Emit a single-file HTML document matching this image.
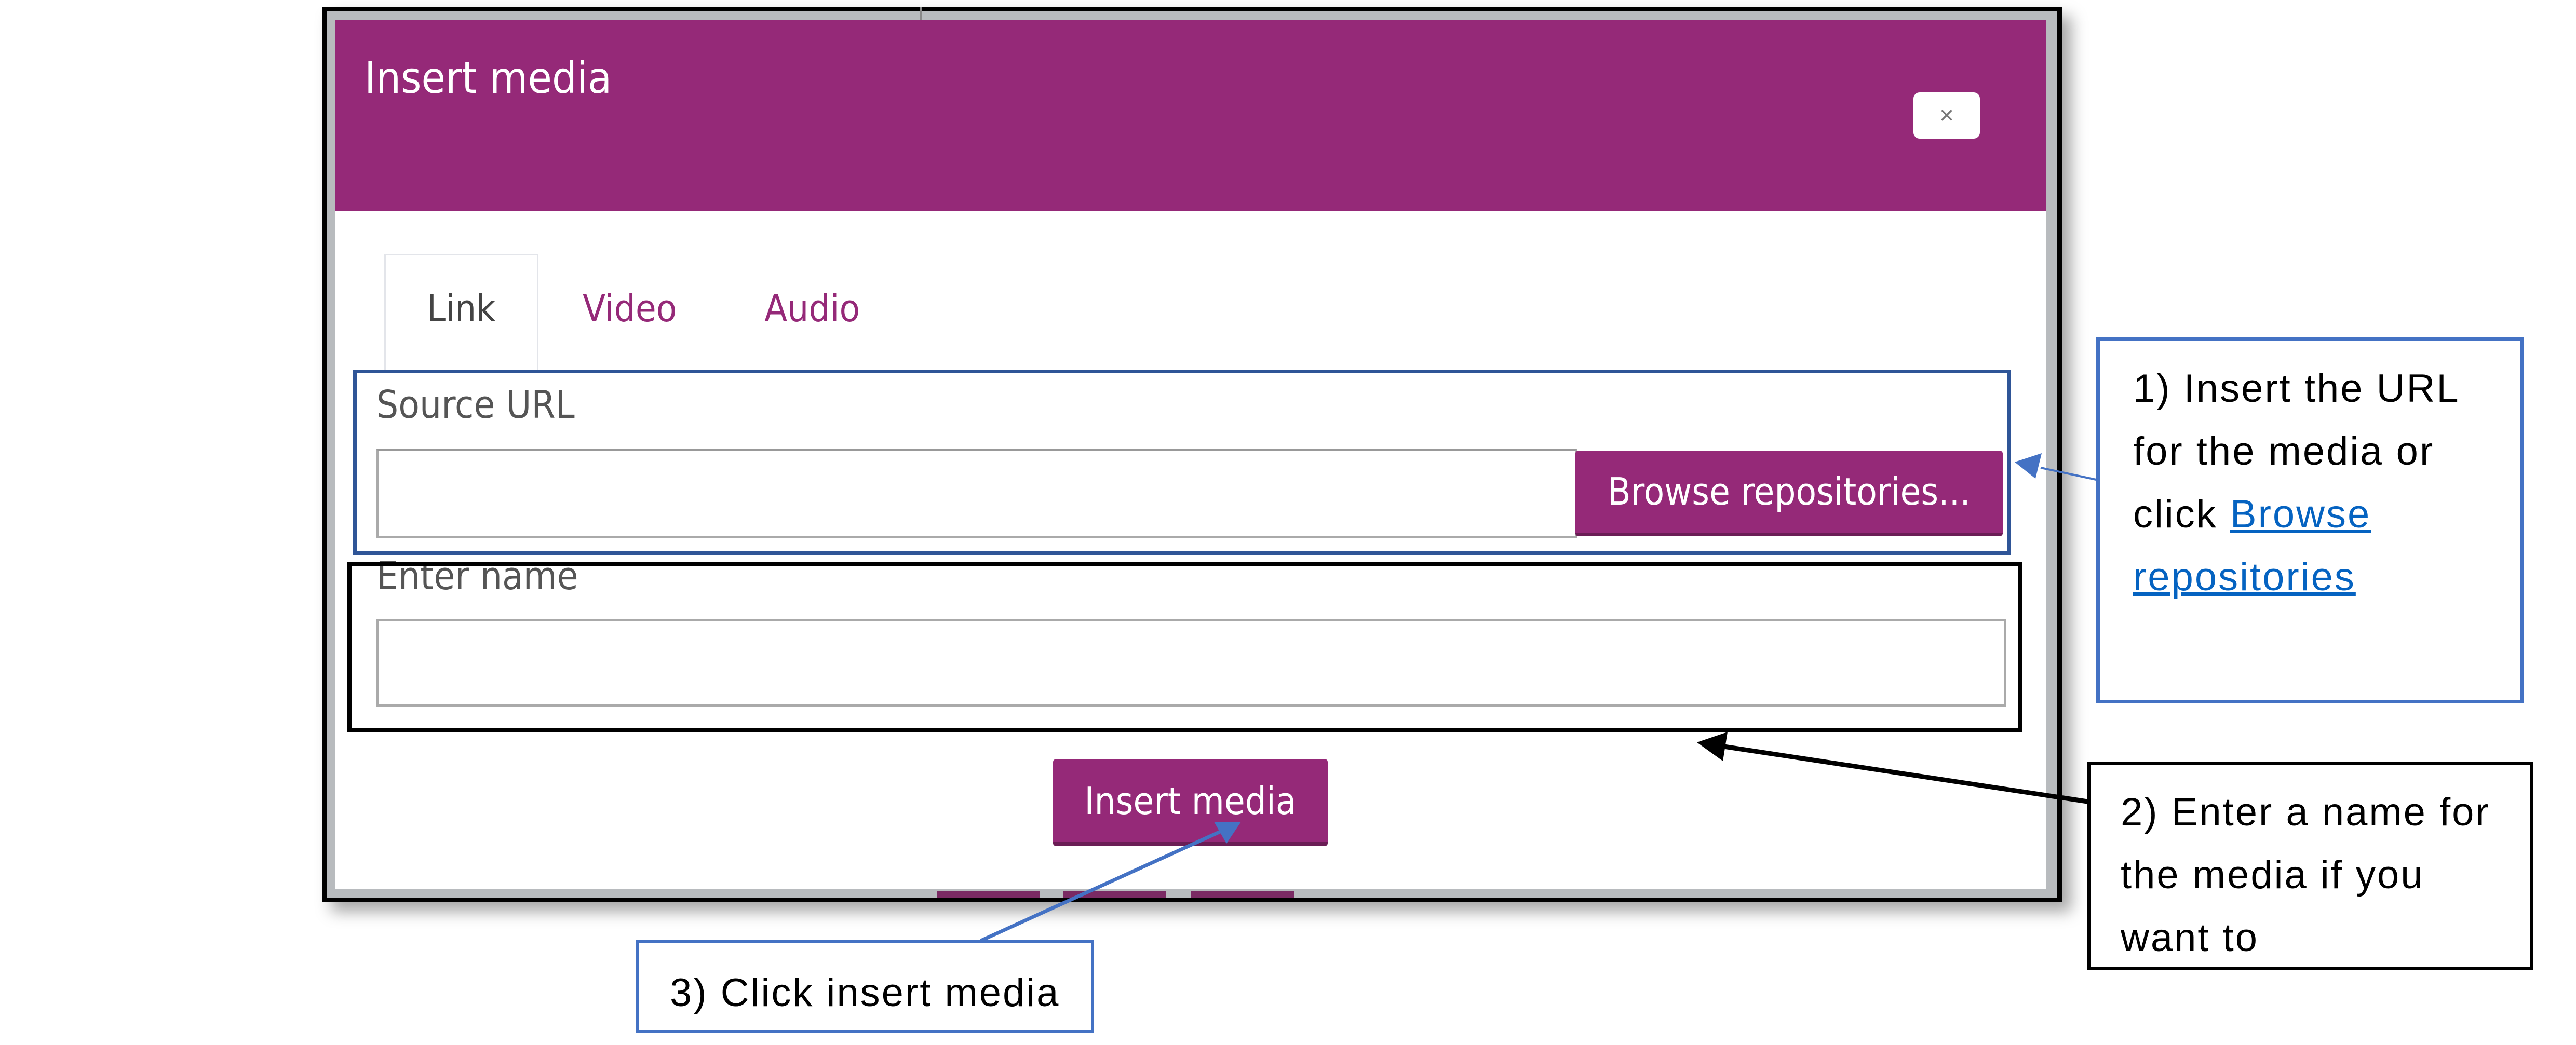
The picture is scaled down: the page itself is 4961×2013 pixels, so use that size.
<!DOCTYPE html>
<html><head><meta charset="utf-8"><style>
*{margin:0;padding:0;box-sizing:border-box}
body{width:4961px;height:2013px;background:#fff;position:relative;overflow:hidden;font-family:"Liberation Sans",sans-serif}
.a{position:absolute}
.ui{font-family:"DejaVu Sans Condensed","Liberation Sans Narrow","Liberation Sans",sans-serif}
.note{font-family:"Liberation Sans",sans-serif;font-size:76px;color:#000;line-height:121px;white-space:nowrap;letter-spacing:3px}
</style></head><body>
<div class="a" style="left:620px;top:13px;width:3351px;height:1725px;background:#b8bbbe;border:9px solid #000;box-shadow:18px 18px 28px rgba(0,0,0,.35)"></div>
<div class="a" style="left:645px;top:38px;width:3295px;height:1674px;background:#fff"></div>
<div class="a" style="left:1772px;top:13px;width:4px;height:25px;background:#888"></div>
<div class="a" style="left:645px;top:38px;width:3295px;height:369px;background:#952978"></div>
<div class="a ui" style="left:702px;top:100px;font-size:84px;color:#fff;line-height:100px">Insert media</div>
<div class="a" style="left:3685px;top:178px;width:128px;height:89px;background:#fff;border-radius:12px;color:#777;font-size:48px;text-align:center;line-height:89px;font-family:'Liberation Sans',sans-serif">×</div>
<div class="a" style="left:740px;top:489px;width:297px;height:230px;border:3px solid #e3e5ea;border-bottom:none"></div>
<div class="a ui" style="left:822px;top:550px;font-size:72px;color:#444;line-height:88px">Link</div>
<div class="a ui" style="left:1122px;top:550px;font-size:72px;color:#952978;line-height:88px">Video</div>
<div class="a ui" style="left:1472px;top:550px;font-size:72px;color:#952978;line-height:88px">Audio</div>
<div class="a ui" style="left:725px;top:736px;font-size:74px;color:#555;line-height:88px">Source URL</div>
<div class="a" style="left:725px;top:865px;width:2312px;height:172px;border:4px solid #aaa;border-top-color:#999"></div>
<div class="a ui" style="left:3034px;top:868px;width:823px;height:165px;background:#952978;border-radius:6px;border-bottom:7px solid #6a1d55;color:#fff;font-size:72px;text-align:center;line-height:158px">Browse repositories...</div>
<div class="a" style="left:680px;top:712px;width:3193px;height:357px;border:7px solid #2f5597"></div>
<div class="a" style="left:720px;top:1060px;width:600px;height:80px;overflow:hidden"><div class="ui" style="position:absolute;left:5px;top:6px;font-size:74px;color:#555;line-height:88px">Enter name</div></div>
<div class="a" style="left:725px;top:1193px;width:3138px;height:168px;border:4px solid #aaa"></div>
<div class="a" style="left:668px;top:1082px;width:3227px;height:329px;border:9px solid #000"></div>
<div class="a ui" style="left:2028px;top:1462px;width:529px;height:168px;background:#952978;border-radius:6px;border-bottom:8px solid #6a1d55;color:#fff;font-size:72px;text-align:center;line-height:162px">Insert media</div>
<div class="a" style="left:1804px;top:1717px;width:198px;height:12px;background:#7a2a63"></div>
<div class="a" style="left:2047px;top:1717px;width:199px;height:12px;background:#7a2a63"></div>
<div class="a" style="left:2293px;top:1717px;width:199px;height:12px;background:#7a2a63"></div>
<div class="a" style="left:4037px;top:649px;width:824px;height:706px;border:7px solid #4472c4"></div>
<div class="a note" style="left:4108px;top:688px">1) Insert the URL<br>for the media or<br>click <span style="color:#0563c1;text-decoration:underline">Browse</span><br><span style="color:#0563c1;text-decoration:underline">repositories</span></div>
<div class="a" style="left:4020px;top:1468px;width:858px;height:400px;border:6px solid #000"></div>
<div class="a note" style="left:4084px;top:1504px">2) Enter a name for<br>the media if you<br>want to</div>
<div class="a" style="left:1224px;top:1810px;width:883px;height:180px;border:6px solid #4472c4"></div>
<div class="a note" style="left:1290px;top:1852px">3) Click insert media</div>
<svg class="a" style="left:0;top:0" width="4961" height="2013">
<line x1="4037" y1="924" x2="3930" y2="901" stroke="#4472c4" stroke-width="4"/>
<polygon points="3880,890 3932,873 3920,922" fill="#4472c4"/>
<line x1="4020" y1="1544" x2="3320" y2="1438" stroke="#000" stroke-width="9"/>
<polygon points="3268,1430 3327,1410 3318,1466" fill="#000"/>
<line x1="1889" y1="1812" x2="2350" y2="1602" stroke="#4472c4" stroke-width="7"/>
<polygon points="2390,1583 2338,1583 2362,1625" fill="#4472c4"/>
</svg>
</body></html>
